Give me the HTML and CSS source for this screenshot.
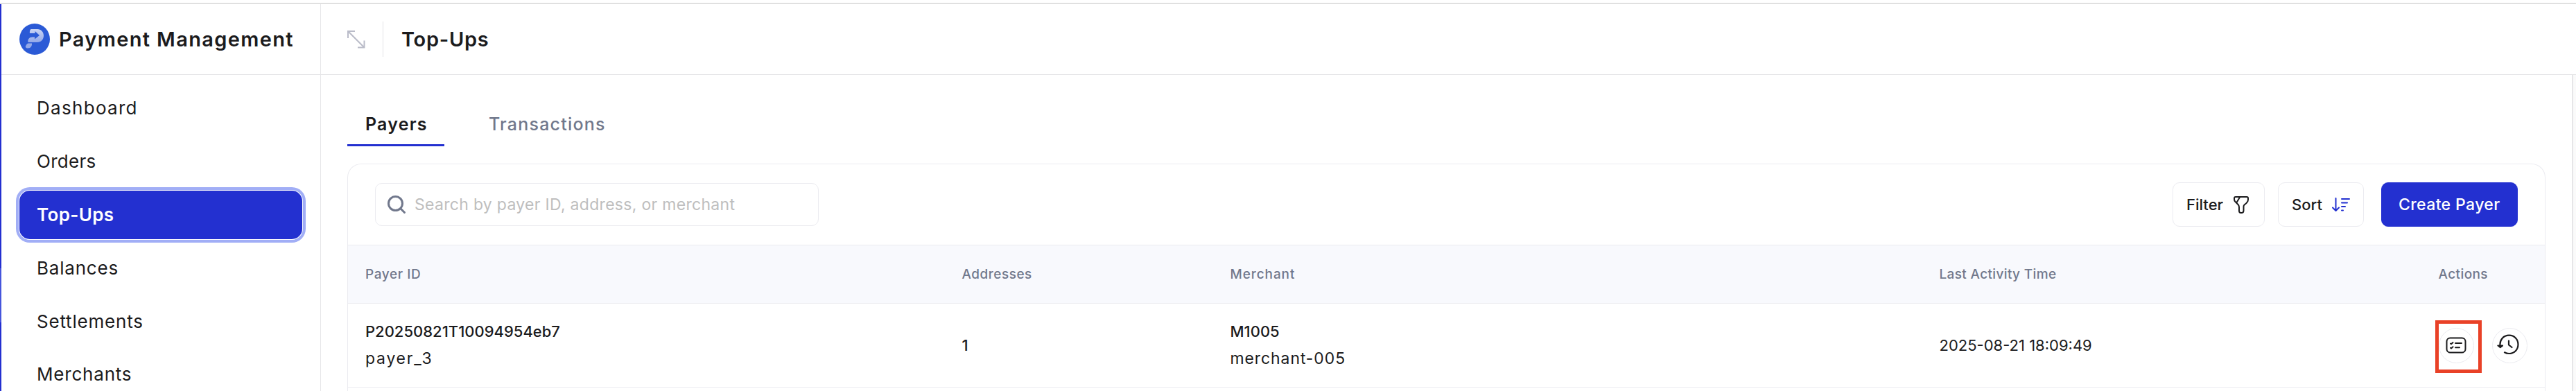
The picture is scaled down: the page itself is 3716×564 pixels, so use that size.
FILE: index.html
```html
<!DOCTYPE html>
<html lang="en">
<head>
<meta charset="utf-8">
<title>Top-Ups – Payment Management</title>
<link rel="stylesheet" href="styles.css">
</head>
<body>
<div class="app">
  <aside class="sidebar">
    <div class="brand">
      <svg class="logo" width="44" height="45" viewBox="0 0 44 45">
        <defs><linearGradient id="g" x1="0" y1="0" x2="0" y2="1"><stop offset="0" stop-color="#c9d4f4"/><stop offset="1" stop-color="#93a8e8"/></linearGradient></defs>
        <ellipse cx="22" cy="22.5" rx="22" ry="22.5" fill="#2b5ad6"/>
        <path d="M16.500 8H26C31 8 35 12 35 17.500S31 27 26 27H12.500C11.500 23 14.500 19.500 18.500 19.500H22V22.500L29 17L22.500 11V14H15C14.500 12 15 9.500 16.500 8Z" fill="url(#g)"/>
        <path d="M12.500 28.500H18C18.500 32 16.500 35.500 12.500 35.500C9 35.500 8 33.500 9.500 31.500C10.300 30 11 29 12.500 28.500Z" fill="#93a8e8"/>
      </svg>
      <span class="brand-name">Payment Management</span>
    </div>
    <nav class="nav">
      <a class="nav-item dashboard">Dashboard</a>
      <a class="nav-item orders">Orders</a>
      <a class="nav-item active">Top-Ups</a>
      <a class="nav-item">Balances</a>
      <a class="nav-item">Settlements</a>
      <a class="nav-item last">Merchants</a>
    </nav>
  </aside>
  <div class="content">
    <header class="topbar">
      <svg class="resize" width="28" height="28" viewBox="0 0 28 28" fill="none" stroke="#babcc9" stroke-width="2"><path d="M2 2L25 25M2 12V2H12M16 25.500H25.500V15.500"/></svg>
      <h1 class="title">Top-Ups</h1>
    </header>
    <div class="body">
      <main class="main">
        <div class="tabs">
          <a class="tab selected">Payers</a>
          <a class="tab">Transactions</a>
        </div>
        <section class="card">
          <div class="toolbar">
            <div class="search">
              <svg width="28" height="28" viewBox="0 0 28 28" fill="none" stroke="#71788c" stroke-width="3" stroke-linecap="round"><circle cx="12.500" cy="12.500" r="10"/><path d="M20 20L25.500 25.500"/></svg>
              <span class="placeholder">Search by payer ID, address, or merchant</span>
            </div>
            <div class="buttons">
              <button class="btn filter">Filter
                <svg width="22" height="25" viewBox="0 0 22 25" fill="none" stroke="#1b1b1d" stroke-width="2" stroke-linejoin="round" stroke-linecap="round"><path d="M3 1H19C20.300 1 21 1.800 21 3V5C21 7 20.200 8.500 18.500 10L15.500 12.500C14.800 13.200 14.500 14 14.500 15V20.500C14.500 22.500 13.300 24 11.500 24H10.500C8.800 24 8 22.800 8 21V15.500C8 14.300 7.500 13.200 6.500 12L2.500 8C1.500 7 1 5.800 1 4.500V3C1 1.800 1.800 1 3 1ZM9 1.500L4.500 9"/></svg>
              </button>
              <button class="btn sort">Sort
                <svg width="26" height="21" viewBox="0 0 26 21" fill="none" stroke="#2330d0" stroke-width="2" stroke-linecap="round" stroke-linejoin="round"><path d="M5.500 1V19M1 14.500L5.500 19L10 14.500M14 2H25M14 7.500H22M14 13H19M14 18.500H16"/></svg>
              </button>
              <button class="btn primary">Create Payer</button>
            </div>
          </div>
          <div class="row head">
            <div class="h-id">Payer ID</div>
            <div class="h-address">Addresses</div>
            <div class="h-merchant">Merchant</div>
            <div class="h-time">Last Activity Time</div>
            <div class="h-actions">Actions</div>
          </div>
          <div class="row data">
            <div><div class="strong">P20250821T10094954eb7</div><div class="payer">payer_3</div></div>
            <div class="strong">1</div>
            <div><div class="strong">M1005</div><div class="merchant">merchant-005</div></div>
            <div>2025-08-21 18:09:49</div>
            <div class="actions">
              <span class="round marked">
                <svg width="30" height="24" viewBox="0 0 30 24" fill="none" stroke="#1b1b1d" stroke-width="2" stroke-linecap="round" stroke-linejoin="round"><rect x="1.500" y="1.500" width="27" height="21" rx="5"/><path d="M14 9H23M14 15.200H20M7 9.500L8 10.300L10.500 8M7 15.700L8 16.500L10.500 14.200"/></svg>
              </span>
              <span class="round">
                <svg class="history" width="32" height="30" viewBox="0 0 32 30" fill="none" stroke="#1b1b1d" stroke-width="2.200" stroke-linecap="round" stroke-linejoin="round"><path d="M4.500 17C3.500 8 9.500 1.700 17.500 1.700C25 1.700 30.500 7.500 30.500 14.800C30.500 22.300 25 28 17.500 28C15 28 12.800 27.400 11 26.300M17 9.500V15.500L21.500 19"/><path d="M1.500 16.500H8L4.600 19Z" fill="#1b1b1d"/></svg>
              </span>
            </div>
          </div>
        </section>
      </main>
      <div class="scrollbar"></div>
    </div>
  </div>
</div>
</body>
</html>
```
FILE: styles.css
```css
*, *::after { box-sizing: border-box; }

body {
  margin: 0;
  padding-top: 4px;
  height: 564px;
  background: #fff;
  color: #1b1b1d;
  font-family: Inter, "Noto Sans", sans-serif;
  font-size: 22px;
}

.app {
  display: flex;
  height: 560px;
  border-top: 2px solid #e0e0e0;
}

.sidebar {
  width: 463px;
  flex: none;
  border-left: 2px solid;
  border-right: 1px solid #e6e6e8;
  border-image: linear-gradient(#2330d0 381px, #4655dc 381px, #4655dc 458px, #2330d0 458px) 1;
  border-image-width: 0 0 0 2px;
  background: linear-gradient(#e6e6e8, #e6e6e8) right / 1px 100% no-repeat border-box;
}

.brand {
  display: flex;
  align-items: center;
  height: 102px;
  padding-left: 26px;
  border-bottom: 1px solid #e6e6e8;
}

.logo { flex: none; }

.brand-name {
  margin-left: 13px;
  font-size: 29px;
  font-weight: 600;
  letter-spacing: 1.35px;
  white-space: nowrap;
}

.nav {
  display: flex;
  flex-direction: column;
  gap: 6.8px;
  padding: 13.4px 26px 0;
}

.nav-item {
  flex: none;
  height: 70px;
  padding-left: 25px;
  line-height: 69px;
  font-size: 26px;
  letter-spacing: 0.8px;
}

.nav-item.dashboard { letter-spacing: 1.3px; }
.nav-item.orders { letter-spacing: 0.3px; }
.nav-item.last { height: 52px; }

.nav-item.active {
  border-radius: 15px;
  background: #2330d0;
  box-shadow: 0 0 0 1px #fff, 0 0 0 5px #a1aef6;
  color: #fff;
  font-weight: 600;
  letter-spacing: 0.35px;
}

.content {
  display: flex;
  flex: 1;
  flex-direction: column;
}

.topbar {
  display: flex;
  align-items: center;
  flex: none;
  height: 102px;
  padding-left: 37px;
  border-bottom: 1px solid #e6e6e8;
}

.title {
  display: flex;
  align-items: center;
  height: 51px;
  margin: 0 0 0 24px;
  padding-left: 26px;
  border-left: 1px solid #e2e2e6;
  font-size: 29px;
  font-weight: 600;
  letter-spacing: 0.7px;
}

.body {
  display: flex;
  flex: 1;
}

.main {
  flex: 1;
  padding: 40px 38px 0;
}

.scrollbar {
  width: 6px;
  border-left: 2px solid #e6e6e8;
  background: #fafafa;
}

.tabs {
  display: flex;
  gap: 38px;
}

.tab {
  height: 63px;
  padding: 0 26px;
  line-height: 62px;
  color: #71788c;
  font-size: 25px;
  font-weight: 500;
  letter-spacing: 1.2px;
}

.tab.selected {
  width: 140px;
  border-bottom: 3px solid #2330d0;
  color: #1b1b1d;
  font-weight: 600;
}

.card {
  height: 328px;
  margin-top: 25px;
  border: 1px solid #ebebf0;
  border-bottom: 0;
  border-radius: 20px 20px 0 0;
}

.toolbar {
  display: flex;
  align-items: center;
  justify-content: space-between;
  height: 116px;
  padding: 0 39px;
}

.search {
  display: flex;
  align-items: center;
  width: 640px;
  height: 62px;
  padding-left: 16px;
  border: 1px solid #ebebf0;
  border-radius: 10px;
}

.placeholder {
  margin-left: 12px;
  color: #bebebe;
  font-size: 23px;
  letter-spacing: 0.3px;
  white-space: nowrap;
}

.buttons { display: flex; }

.btn {
  display: flex;
  align-items: center;
  justify-content: space-between;
  height: 64px;
  padding: 0 22px 0 19px;
  border: 1px solid #ebebf0;
  border-radius: 10px;
  background: #fff;
  color: #1b1b1d;
  font: 500 22px Inter, "Noto Sans", sans-serif;
}

.filter {
  width: 133px;
  margin-right: 19px;
}

.sort {
  width: 124px;
  margin-right: 25px;
  padding-right: 19px;
}

.primary {
  width: 197px;
  padding: 0 0 0 24px;
  border-color: #2330d0;
  background: #2330d0;
  color: #fff;
  font-size: 23px;
  letter-spacing: 0.38px;
}

.row {
  display: grid;
  grid-template-columns: 860.5px 387px 1023px 720px 1fr;
  align-items: center;
  padding-left: 25px;
  border-bottom: 1px solid #ebebf0;
}

.head {
  height: 85px;
  border-top: 1px solid #ebebf0;
  background: #f8f9fd;
  color: #71788c;
  font-size: 19px;
  font-weight: 500;
}

.h-id { letter-spacing: 0.6px; }
.h-address { letter-spacing: 0.5px; }
.h-merchant { letter-spacing: 0.9px; }
.h-time { letter-spacing: 0.35px; }
.h-actions { letter-spacing: 0.4px; }

.data {
  height: 121px;
  line-height: 39px;
}

.strong { font-weight: 500; }

.payer {
  font-size: 23px;
  letter-spacing: 1.75px;
}

.merchant {
  font-size: 23px;
  letter-spacing: 0.9px;
}

.actions {
  display: flex;
  gap: 26px;
}

.round {
  display: flex;
  align-items: center;
  justify-content: center;
  position: relative;
  width: 51px;
  height: 51px;
  border: 1px solid #ebebf0;
  border-radius: 50%;
}

.history {
  margin-left: -4px;
  margin-top: -2px;
}

.marked::after {
  content: "";
  position: absolute;
  left: -6px;
  top: -12px;
  width: 67px;
  height: 76px;
  border: 5px solid #e94127;
}
```
